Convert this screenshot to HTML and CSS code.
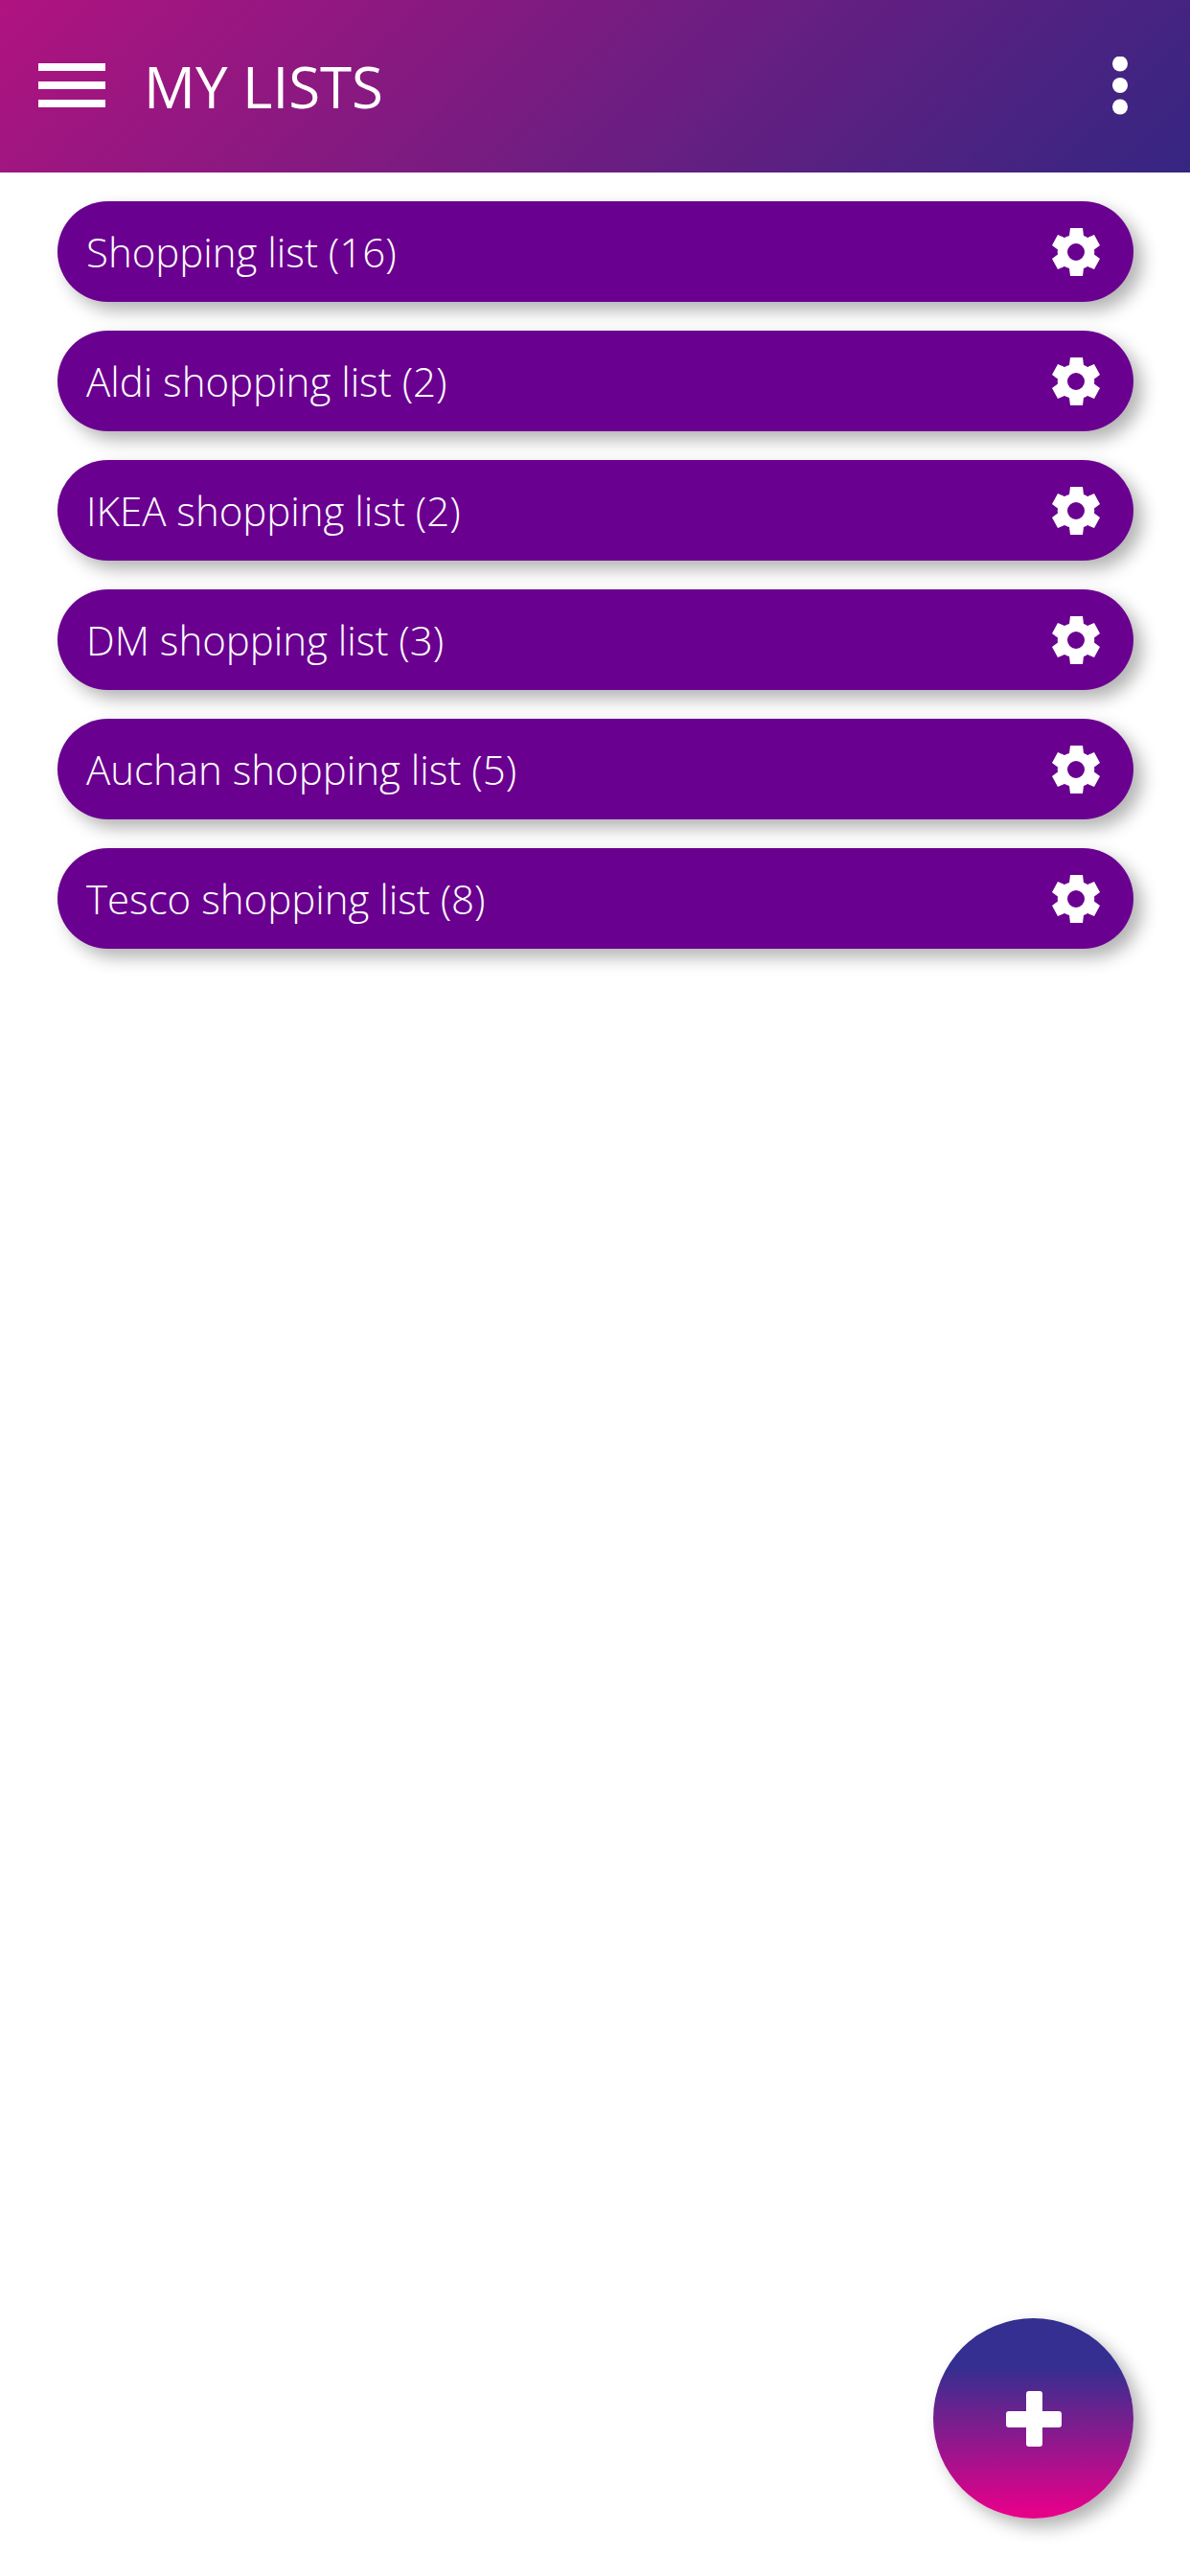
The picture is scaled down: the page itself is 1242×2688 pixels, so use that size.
FILE: index.html
```html
<!DOCTYPE html>
<html lang="en">
<head>
<meta charset="utf-8">
<meta name="viewport" content="width=device-width, initial-scale=1">
<title>My lists</title>
<link rel="stylesheet" href="styles.css">
</head>
<body>
<svg class="sprite" aria-hidden="true">
  <symbol id="gear" viewBox="-30 -30 60 60">
    <path fill-rule="evenodd" d="M-6-25H7L8-17Q10-16.500 12-15L19-18L25-7L19-2.500Q19.500 0 19 2.500L25 7L19 18L12 15Q10 16.500 8 17L7 25H-6L-7 17Q-9 16.500-12 15L-19 18L-25 7L-19 2.500Q-19.500 0-19-2.500L-25-7L-19-18L-12-15Q-9-16.500-7-17ZM0-9A9 9 0 1 0 0 9A9 9 0 1 0 0-9Z"/>
  </symbol>
</svg>
<header class="bar">
  <button class="icon-button" type="button" aria-label="Open menu">
    <svg width="70" height="48" viewBox="0 0 70 48"><path d="M0 0H70V8H0ZM0 19H70V27H0ZM0 38H70V46H0Z"/></svg>
  </button>
  <h1 class="title">MY LISTS</h1>
  <button class="icon-button" type="button" aria-label="More options">
    <svg width="16" height="62" viewBox="0 0 16 62"><circle cx="8" cy="7.500" r="8"/><circle cx="8" cy="30" r="8"/><circle cx="8" cy="52.500" r="8"/></svg>
  </button>
</header>
<main class="main">
  <ul class="lists">
    <li class="list"><a class="list-link" href="#shopping">Shopping list (16)</a><button class="icon-button" type="button" aria-label="Shopping list settings"><svg class="gear"><use href="#gear"/></svg></button></li>
    <li class="list"><a class="list-link" href="#aldi">Aldi shopping list (2)</a><button class="icon-button" type="button" aria-label="Aldi list settings"><svg class="gear"><use href="#gear"/></svg></button></li>
    <li class="list"><a class="list-link" href="#ikea">IKEA shopping list (2)</a><button class="icon-button" type="button" aria-label="IKEA list settings"><svg class="gear"><use href="#gear"/></svg></button></li>
    <li class="list"><a class="list-link" href="#dm">DM shopping list (3)</a><button class="icon-button" type="button" aria-label="DM list settings"><svg class="gear"><use href="#gear"/></svg></button></li>
    <li class="list"><a class="list-link" href="#auchan">Auchan shopping list (5)</a><button class="icon-button" type="button" aria-label="Auchan list settings"><svg class="gear"><use href="#gear"/></svg></button></li>
    <li class="list"><a class="list-link" href="#tesco">Tesco shopping list (8)</a><button class="icon-button" type="button" aria-label="Tesco list settings"><svg class="gear"><use href="#gear"/></svg></button></li>
  </ul>
  <button class="add" type="button" aria-label="Add list">
    <svg width="60" height="60" viewBox="0 0 60 60"><rect x="22" y="1" width="17" height="58" rx="3"/><rect x="1" y="22" width="58" height="17" rx="3"/></svg>
  </button>
</main>
</body>
</html>
```

FILE: styles.css
```css
* {
  box-sizing: border-box;
}

body {
  margin: 0;
  min-height: 100vh;
  display: flex;
  flex-direction: column;
  background: #fff;
  color: #fff;
  font-family: "Open Sans", "Noto Sans", sans-serif;
}

.sprite {
  display: none;
}

.bar {
  display: flex;
  align-items: center;
  gap: 40px;
  height: 180px;
  padding: 0 65px 0 40px;
  background: linear-gradient(135deg, #b01380, #352682);
}

.title {
  flex: 1;
  margin: 0;
  font-size: 60px;
  font-weight: 400;
  line-height: 80px;
}

.icon-button {
  display: flex;
  padding: 0;
  border: 0;
  background: none;
  cursor: pointer;
}

svg {
  fill: #fff;
}

.main {
  flex: 1;
  display: flex;
  flex-direction: column;
  justify-content: space-between;
  padding: 30px 59px 60px 60px;
}

.lists {
  display: flex;
  flex-direction: column;
  gap: 30px;
  margin: 0;
  padding: 0;
  list-style: none;
}

.list {
  display: flex;
  align-items: center;
  height: 105px;
  padding: 0 30px;
  border-radius: 53px;
  background: #6a0090;
  box-shadow: 9px 9px 18px rgba(0, 0, 0, 0.3);
}

.list-link {
  flex: 1;
  color: #fff;
  font-size: 42px;
  font-weight: 300;
  line-height: 60px;
  text-decoration: none;
}

.gear {
  width: 60px;
  height: 60px;
}

.add {
  display: flex;
  align-items: center;
  justify-content: center;
  align-self: flex-end;
  width: 209px;
  height: 209px;
  padding: 0;
  border: 0;
  border-radius: 50%;
  background: linear-gradient(#342f90 24%, #73208e 50%, #e5008a 97%);
  box-shadow: 9px 9px 18px rgba(0, 0, 0, 0.3);
  cursor: pointer;
}
```
